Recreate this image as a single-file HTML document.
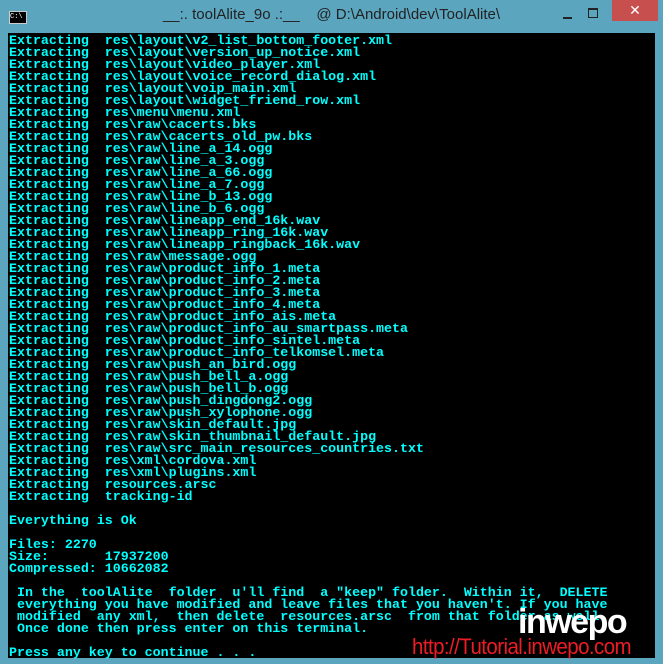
<!DOCTYPE html>
<html><head><style>
html,body{margin:0;padding:0;}
body{width:663px;height:664px;background:#5ba5bf;position:relative;overflow:hidden;font-family:"Liberation Sans",sans-serif;}
.title{position:absolute;top:6px;left:0;width:663px;text-align:center;font-size:15px;color:#222;}
.icon{position:absolute;left:9px;top:11px;width:16px;height:11px;background:#000;border:1px solid #ccc;color:#fff;font-size:7px;line-height:11px;font-family:"Liberation Mono",monospace;}
.close{position:absolute;left:612px;top:0;width:46px;height:21px;background:#c7504f;color:#fff;text-align:center;font-size:14px;line-height:20px;}
.min{position:absolute;left:563px;top:17px;width:9px;height:2px;background:#222;}
.max{position:absolute;left:588px;top:8px;width:8px;height:7px;border:1px solid #222;border-top-width:2px;}
.con{position:absolute;left:8px;top:33px;width:647px;height:625px;background:#000;}
pre{margin:0;position:absolute;left:1px;top:2px;font-family:"Liberation Mono",monospace;font-size:13.3px;line-height:12px;color:#00ffff;font-weight:bold;letter-spacing:0;}
.wm1{position:absolute;left:518px;top:603px;color:#fff;font-size:34px;font-weight:bold;letter-spacing:-1.5px;}
.wm2{position:absolute;left:412px;top:634px;color:#ee1c24;font-size:22px;letter-spacing:-0.6px;transform:scaleX(0.93);transform-origin:left top;}
</style></head><body>
<div class="icon">C:\</div>
<div class="title">__:. toolAlite_9o .:__&nbsp;&nbsp;&nbsp;&nbsp;@ D:\Android\dev\ToolAlite\</div>
<div class="min"></div><div class="max"></div>
<div class="close">✕</div>
<div class="con"><pre>Extracting  res\layout\v2_list_bottom_footer.xml
Extracting  res\layout\version_up_notice.xml
Extracting  res\layout\video_player.xml
Extracting  res\layout\voice_record_dialog.xml
Extracting  res\layout\voip_main.xml
Extracting  res\layout\widget_friend_row.xml
Extracting  res\menu\menu.xml
Extracting  res\raw\cacerts.bks
Extracting  res\raw\cacerts_old_pw.bks
Extracting  res\raw\line_a_14.ogg
Extracting  res\raw\line_a_3.ogg
Extracting  res\raw\line_a_66.ogg
Extracting  res\raw\line_a_7.ogg
Extracting  res\raw\line_b_13.ogg
Extracting  res\raw\line_b_6.ogg
Extracting  res\raw\lineapp_end_16k.wav
Extracting  res\raw\lineapp_ring_16k.wav
Extracting  res\raw\lineapp_ringback_16k.wav
Extracting  res\raw\message.ogg
Extracting  res\raw\product_info_1.meta
Extracting  res\raw\product_info_2.meta
Extracting  res\raw\product_info_3.meta
Extracting  res\raw\product_info_4.meta
Extracting  res\raw\product_info_ais.meta
Extracting  res\raw\product_info_au_smartpass.meta
Extracting  res\raw\product_info_sintel.meta
Extracting  res\raw\product_info_telkomsel.meta
Extracting  res\raw\push_an_bird.ogg
Extracting  res\raw\push_bell_a.ogg
Extracting  res\raw\push_bell_b.ogg
Extracting  res\raw\push_dingdong2.ogg
Extracting  res\raw\push_xylophone.ogg
Extracting  res\raw\skin_default.jpg
Extracting  res\raw\skin_thumbnail_default.jpg
Extracting  res\raw\src_main_resources_countries.txt
Extracting  res\xml\cordova.xml
Extracting  res\xml\plugins.xml
Extracting  resources.arsc
Extracting  tracking-id

Everything is Ok

Files: 2270
Size:       17937200
Compressed: 10662082

 In the  toolAlite  folder  u'll find  a "keep" folder.  Within it,  DELETE
 everything you have modified and leave files that you haven't. If you have
 modified  any xml,  then delete  resources.arsc  from that folder as well.
 Once done then press enter on this terminal.

Press any key to continue . . .</pre></div>
<div class="wm1">inwepo</div>
<div class="wm2">http://Tutorial.inwepo.com</div>
</body></html>
